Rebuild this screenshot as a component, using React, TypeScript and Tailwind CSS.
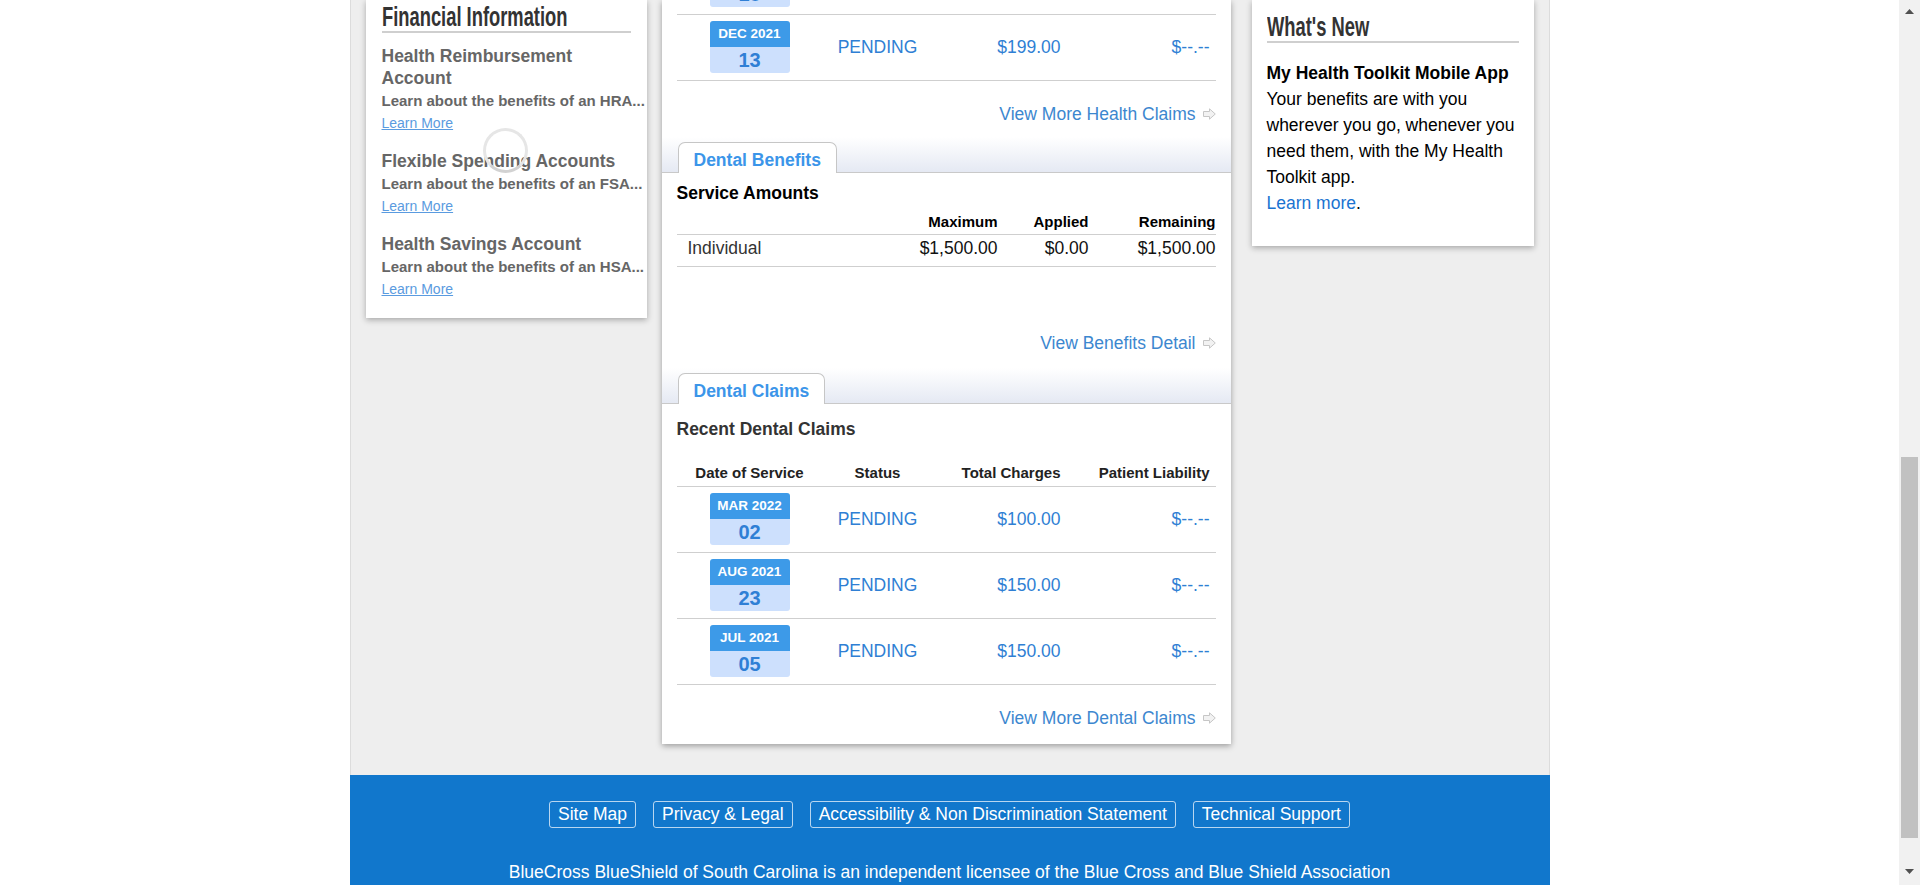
import React from 'react';

type Claim = {
    month: string;
    day: string;
    status: string;
    charges: string;
    liability: string;
};

const healthClaims: Claim[] = [
    { month: 'JAN 2022', day: '18', status: 'PENDING', charges: '$245.00', liability: '$--.--' },
    { month: 'DEC 2021', day: '13', status: 'PENDING', charges: '$199.00', liability: '$--.--' },
];

const dentalClaims: Claim[] = [
    { month: 'MAR 2022', day: '02', status: 'PENDING', charges: '$100.00', liability: '$--.--' },
    { month: 'AUG 2021', day: '23', status: 'PENDING', charges: '$150.00', liability: '$--.--' },
    { month: 'JUL 2021', day: '05', status: 'PENDING', charges: '$150.00', liability: '$--.--' },
];

const accounts = [
    { title: 'Health Reimbursement Account', desc: 'Learn about the benefits of an HRA...' },
    { title: 'Flexible Spending Accounts', desc: 'Learn about the benefits of an FSA...' },
    { title: 'Health Savings Account', desc: 'Learn about the benefits of an HSA...' },
];

const footerLinks = ['Site Map', 'Privacy & Legal', 'Accessibility & Non Discrimination Statement', 'Technical Support'];

function ArrowIcon() {
    return (
        <svg width="13" height="12" viewBox="0 0 13 12" className="shrink-0">
            <path d="M0.5 3.5 H6.5 V0.8 L12.3 6 L6.5 11.2 V8.5 H0.5 Z" fill="#f2f2f2" stroke="#c6c6c6" strokeWidth="1" />
        </svg>
    );
}

function ViewLink({ label, className }: { label: string; className: string }) {
    return (
        <div className={`flex items-center justify-end gap-[7px] px-[15px] text-[17.5px] leading-[24px] text-[#3c87cf] ${className}`}>
            <a href="#">{label}</a>
            <ArrowIcon />
        </div>
    );
}

function TabStrip({ label }: { label: string }) {
    return (
        <div className="flex h-[36px] items-end border-b border-[#c9c9c9] bg-linear-to-b from-white to-[#e5e9f3] pl-[16px]">
            <div className="-mb-px rounded-t-[7px] border border-b-0 border-[#c6c6c6] bg-white px-[15px] pt-[4px] text-[17.5px] font-bold leading-[26px] text-[#3b95e9]">
                {label}
            </div>
        </div>
    );
}

function DateBadge({ month, day }: { month: string; day: string }) {
    return (
        <div className="mx-auto w-[80px] overflow-hidden rounded-[3px] text-center">
            <div className="h-[26px] bg-[#3d9ae8] text-[13.5px] font-bold leading-[26px] text-white">{month}</div>
            <div className="h-[26px] bg-[#cde0fd] text-[20px] font-bold leading-[27px] text-[#2f7fd5]">{day}</div>
        </div>
    );
}

function ClaimRow({ claim }: { claim: Claim }) {
    return (
        <div className="grid grid-cols-[146px_110px_136px_148px] items-center border-b border-[#cfcfcf] pt-[6px] pb-[7px] text-[17.5px] text-[#2f7fd4]">
            <DateBadge month={claim.month} day={claim.day} />
            <div className="text-center">{claim.status}</div>
            <div className="pr-[8px] text-right">{claim.charges}</div>
            <div className="pr-[7px] text-right">{claim.liability}</div>
        </div>
    );
}

function Heading({ children, className }: { children: React.ReactNode; className: string }) {
    return (
        <h2 className={`flex border-b-2 border-[#cfcfcf] ${className}`}>
            <span className="inline-block origin-left scale-x-[0.655] whitespace-nowrap text-[28px] font-bold leading-[28px] text-[#333]">
                {children}
            </span>
        </h2>
    );
}

function Scrollbar() {
    return (
        <div className="flex w-[21px] shrink-0 flex-col items-center bg-[#f1f1f1]">
            <svg width="9" height="5" viewBox="0 0 9 5" className="mt-[9px]">
                <polygon points="4.5,0 9,5 0,5" fill="#505050" />
            </svg>
            <div className="mt-[443px] h-[381px] w-[17px] bg-[#c1c1c1]" />
            <div className="flex-1" />
            <svg width="9" height="5" viewBox="0 0 9 5" className="mb-[11px]">
                <polygon points="0,0 9,0 4.5,5" fill="#505050" />
            </svg>
        </div>
    );
}

export default function App() {
    return (
        <div className="flex h-[885px] w-full overflow-hidden bg-white font-['Liberation_Sans',Arial,sans-serif]">
            <div className="flex min-w-0 flex-1 flex-col">
                {/* Main gray area */}
                <div className="mx-auto flex w-[1200px] items-start border-x border-[#dcdcdc] bg-[#eeeeee] px-[15px] pb-[31px]">
                    {/* Left: Financial Information */}
                    <div className="relative w-[281px] bg-white px-[16px] pb-[18px] shadow-[0_2px_6px_rgba(0,0,0,0.3)]">
                        <Heading className="pt-[3px]">Financial Information</Heading>
                        <div className="mt-[12px] flex flex-col gap-[16px]">
                            {accounts.map((a) => (
                                <div key={a.title}>
                                    <div className="text-[17.5px] font-bold leading-[22px] text-[#666]">{a.title}</div>
                                    <div className="mt-[1px] whitespace-nowrap text-[15px] font-bold leading-[22px] text-[#666]">
                                        {a.desc}
                                    </div>
                                    <a href="#" className="block text-[14px] leading-[22px] text-[#5a9be0] underline">
                                        Learn More
                                    </a>
                                </div>
                            ))}
                        </div>
                        {/* loading spinner */}
                        <div className="absolute left-[117px] top-[128px] h-[45px] w-[45px] rounded-full border-[3px] border-[#e6e6e6] border-b-[#d2d2d2]" />
                    </div>

                    {/* Middle: claims and benefits */}
                    <div className="ml-[15px] w-[569px] bg-white shadow-[0_2px_6px_rgba(0,0,0,0.35)]">
                        <div className="-mt-[51px] px-[15px]">
                            {healthClaims.map((c) => (
                                <ClaimRow key={c.month + c.day} claim={c} />
                            ))}
                        </div>
                        <ViewLink label="View More Health Claims" className="pt-[21px] pb-[11px]" />

                        <TabStrip label="Dental Benefits" />
                        <div className="px-[15px]">
                            <h3 className="pt-[8px] text-[17.5px] font-bold leading-[24px] text-black">Service Amounts</h3>
                            <div className="grid grid-cols-[221px_100px_91px_128px] border-b border-[#cfcfcf] pt-[6px] pb-[2px] text-[15px] font-bold leading-[21px] text-black">
                                <div />
                                <div className="text-right">Maximum</div>
                                <div className="text-right">Applied</div>
                                <div className="pr-[1px] text-right">Remaining</div>
                            </div>
                            <div className="grid grid-cols-[221px_100px_91px_128px] border-b border-[#cfcfcf] pt-[1px] pb-[6px] text-[17.5px] leading-[24px] text-[#111]">
                                <div className="pl-[11px] text-[#333]">Individual</div>
                                <div className="text-right">$1,500.00</div>
                                <div className="text-right">$0.00</div>
                                <div className="pr-[1px] text-right">$1,500.00</div>
                            </div>
                        </div>
                        <ViewLink label="View Benefits Detail" className="pt-[64px] pb-[13px]" />

                        <TabStrip label="Dental Claims" />
                        <div className="px-[15px]">
                            <h3 className="pt-[13px] text-[17.5px] font-bold leading-[24px] text-[#333]">Recent Dental Claims</h3>
                            <div className="grid grid-cols-[146px_110px_136px_148px] border-b border-[#cfcfcf] pt-[21px] pb-[3px] text-[15px] font-bold leading-[21px] text-[#222]">
                                <div className="text-center">Date of Service</div>
                                <div className="text-center">Status</div>
                                <div className="pr-[8px] text-right">Total Charges</div>
                                <div className="pr-[7px] text-right">Patient Liability</div>
                            </div>
                            {dentalClaims.map((c) => (
                                <ClaimRow key={c.month + c.day} claim={c} />
                            ))}
                        </div>
                        <ViewLink label="View More Dental Claims" className="pt-[21px] pb-[14px]" />
                    </div>

                    {/* Right: What's New */}
                    <div className="ml-[21px] w-[282px] bg-white px-[15px] pb-[30px] shadow-[0_2px_6px_rgba(0,0,0,0.3)]">
                        <Heading className="pt-[13px]">What's New</Heading>
                        <div className="mt-[17px] text-[17.5px] leading-[26px] text-black">
                            <div className="font-bold">My Health Toolkit Mobile App</div>
                            <p>Your benefits are with you wherever you go, whenever you need them, with the My Health Toolkit app.</p>
                            <p>
                                <a href="#" className="text-[#1a73d1]">
                                    Learn more
                                </a>
                                .
                            </p>
                        </div>
                    </div>
                </div>

                {/* Footer */}
                <footer className="mx-auto w-[1200px] bg-[#1177cc] pt-[26px] pb-[40px] text-white">
                    <nav className="flex justify-center gap-[17px]">
                        {footerLinks.map((l) => (
                            <a key={l} href="#" className="rounded-[3px] border border-white/70 px-[8px] text-[17.5px] leading-[25px]">
                                {l}
                            </a>
                        ))}
                    </nav>
                    <p className="mt-[32px] text-center text-[17.5px] leading-[24px]">
                        BlueCross BlueShield of South Carolina is an independent licensee of the Blue Cross and Blue Shield Association
                    </p>
                </footer>
            </div>
            <Scrollbar />
        </div>
    );
}
